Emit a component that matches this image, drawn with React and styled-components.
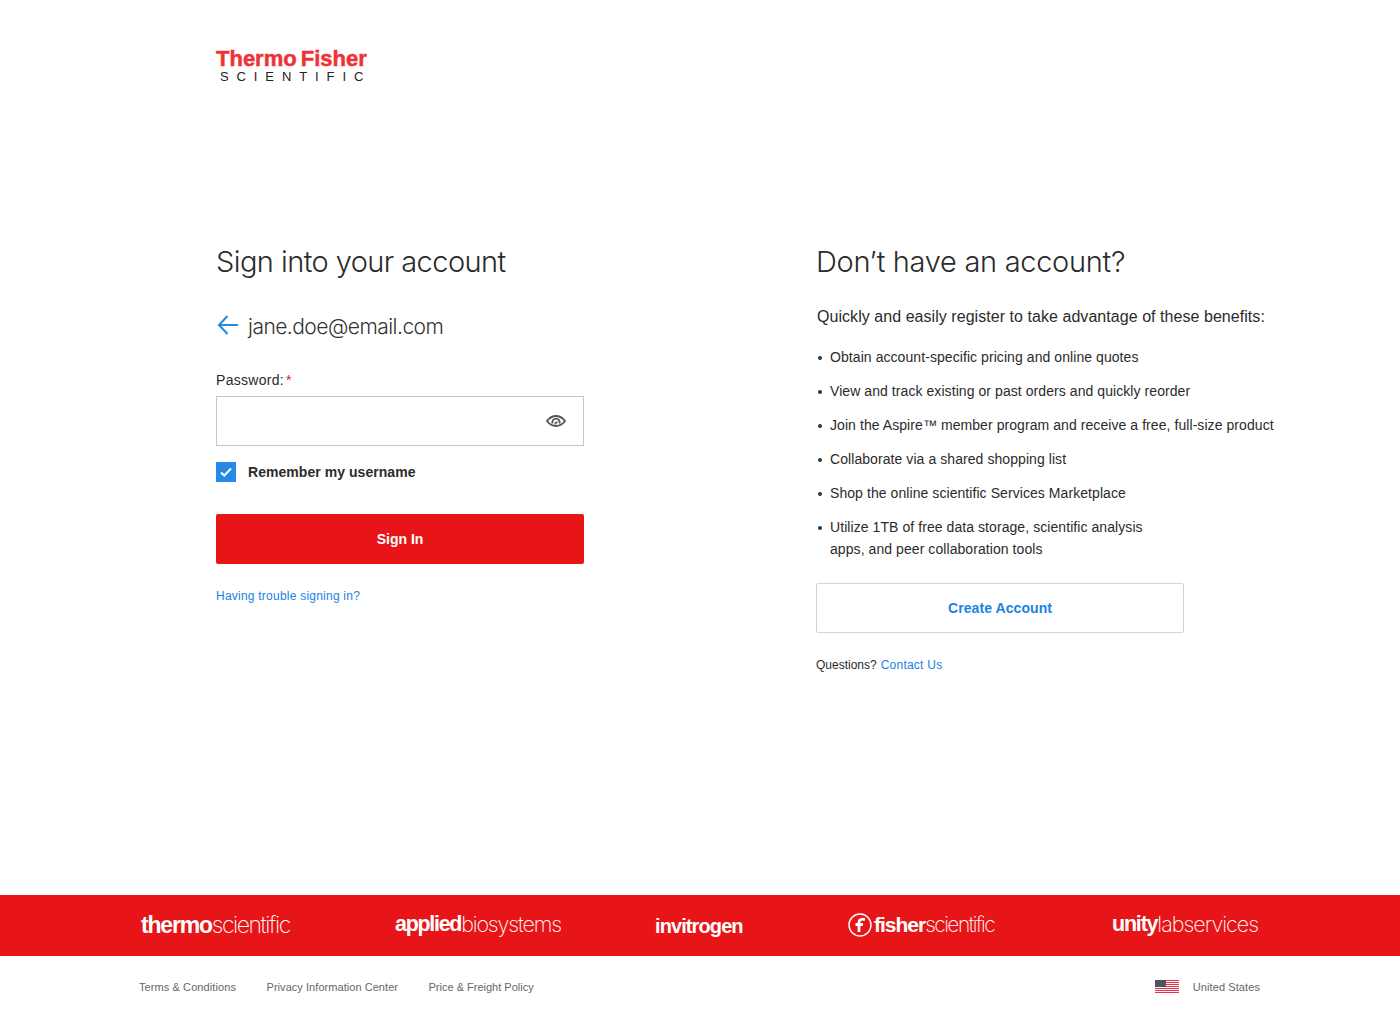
import React from 'react';
import styled, { createGlobalStyle } from 'styled-components';

const GlobalStyle = createGlobalStyle`
  html, body {
    margin: 0;
    padding: 0;
    background: #fff;
  }
  body {
    font-family: "Liberation Sans", Arial, sans-serif;
    color: #2b2b2b;
  }
`;

const Page = styled.div`
  min-height: 100vh;
  display: flex;
  flex-direction: column;
`;

const Header = styled.header`
  height: 245px;
  padding: 49px 0 0 216px;
  box-sizing: border-box;
`;

const Logo = styled.div`
  width: 152px;
`;

const LogoTop = styled.div`
  color: #ee3338;
  font-weight: 700;
  font-size: 22px;
  line-height: 20px;
  white-space: nowrap;
  display: flex;
  gap: 4px;
  -webkit-text-stroke: 0.5px #ee3338;
`;

const LogoBottom = styled.div`
  color: #222;
  font-size: 13px;
  line-height: 12px;
  letter-spacing: 7.9px;
  margin-top: 2px;
  padding-left: 4px;
  white-space: nowrap;
`;

const Main = styled.main`
  flex: 1;
  display: grid;
  grid-template-columns: 368px 1fr;
  column-gap: 232px;
  padding-left: 216px;
`;

const Heading = styled.h1`
  margin: 0;
  font-family: "Inter", "Liberation Sans", sans-serif;
  font-weight: 300;
  font-size: 29px;
  line-height: 34px;
  color: #2b2b2b;
  letter-spacing: ${p => p.$track}px;
`;

const EmailRow = styled.div`
  display: flex;
  align-items: center;
  gap: 9px;
  margin-top: 31px;
  height: 30px;
`;

const BackIcon = styled.svg`
  width: 23px;
  height: 22px;
  flex: none;
`;

const Email = styled.span`
  font-family: "Inter", "Liberation Sans", sans-serif;
  font-weight: 300;
  font-size: 21px;
  letter-spacing: -0.53px;
  padding-top: 2px;
  color: #333;
`;

const FieldLabel = styled.label`
  display: block;
  margin-top: 31px;
  font-size: 14px;
  line-height: 18px;
  letter-spacing: 0.3px;
  color: #2b2b2b;
`;

const Star = styled.span`
  color: #e8171a;
  margin-left: 2px;
`;

const InputBox = styled.div`
  margin-top: 7px;
  height: 50px;
  box-sizing: border-box;
  border: 1px solid #c6c6c6;
  display: flex;
  align-items: center;
  justify-content: flex-end;
  padding-right: 17px;
`;

const CheckRow = styled.div`
  display: flex;
  align-items: center;
  gap: 12px;
  margin-top: 16px;
  height: 20px;
`;

const CheckBox = styled.span`
  width: 20px;
  height: 20px;
  background: #2589e8;
  display: flex;
  align-items: center;
  justify-content: center;
`;

const CheckLabel = styled.span`
  font-size: 14px;
  font-weight: 700;
  letter-spacing: 0.05px;
  color: #2b2b2b;
`;

const SignIn = styled.button`
  display: block;
  width: 100%;
  height: 50px;
  margin-top: 32px;
  border: 0;
  border-radius: 2px;
  background: #e81518;
  color: #fff;
  font: 700 14px "Liberation Sans", Arial, sans-serif;
`;

const SmallLink = styled.a`
  color: #1a82e2;
  font-size: 12px;
  letter-spacing: 0.23px;
  text-decoration: none;
`;

const TroubleRow = styled.div`
  margin-top: 23px;
  line-height: 16px;
`;

const Intro = styled.p`
  margin: 27px 0 0;
  font-size: 16px;
  line-height: 22px;
  letter-spacing: 0.05px;
  color: #2b2b2b;
  padding-left: 1px;
`;

const Benefits = styled.ul`
  list-style: none;
  margin: 18px 0 0;
  padding: 0;
`;

const Benefit = styled.li`
  position: relative;
  padding-left: 14px;
  font-size: 14px;
  line-height: 22px;
  letter-spacing: 0.07px;
  margin-bottom: 12px;
  color: #2b2b2b;

  &::before {
    content: '';
    position: absolute;
    left: 2px;
    top: 10px;
    width: 4px;
    height: 4px;
    border-radius: 50%;
    background: #333;
  }

  &:last-child {
    margin-bottom: 0;
  }
`;

const CreateAccount = styled.button`
  display: block;
  width: 368px;
  height: 50px;
  margin-top: 23px;
  background: #fff;
  border: 1px solid #d4d4d4;
  border-radius: 2px;
  color: #1a82e2;
  font: 700 14px "Liberation Sans", Arial, sans-serif;
  letter-spacing: 0.08px;
`;

const Questions = styled.div`
  margin-top: 24px;
  font-size: 12px;
  line-height: 16px;
  color: #2b2b2b;
  display: flex;
  gap: 4px;
`;

const BrandBar = styled.div`
  height: 61px;
  background: #e81518;
  display: flex;
  align-items: center;
  padding-left: 141px;
  color: #fff;
`;

const Brand = styled.div`
  display: flex;
  align-items: center;
  width: ${p => p.$width}px;
  font-size: ${p => p.$size}px;
  white-space: nowrap;
  line-height: 30px;
  margin-top: ${p => p.$drop || 0}px;
`;

const BrandBold = styled.span`
  font-weight: 700;
  letter-spacing: ${p => p.$track}px;
`;

const BrandLight = styled.span`
  font-family: "Inter", "Liberation Sans", sans-serif;
  font-weight: 200;
  letter-spacing: ${p => p.$track}px;
`;

const FisherMark = styled.svg`
  width: 24px;
  height: 24px;
  margin-right: 2px;
  flex: none;
`;

const FootBar = styled.footer`
  height: 61px;
  display: flex;
  align-items: center;
  padding: 0 140px 0 139px;
  font-size: 11px;
  color: #666;
`;

const FootLinks = styled.nav`
  display: flex;
  gap: 30.5px;
  flex: 1;
`;

const FootLink = styled.a`
  color: #666;
  text-decoration: none;
  letter-spacing: ${p => p.$track || 0}px;
`;

const Locale = styled.div`
  display: flex;
  align-items: center;
  gap: 14px;
  letter-spacing: 0.09px;
`;

const Flag = () => (
  <svg width="24" height="13" viewBox="0 0 24 13">
    {[0, 2, 4, 6, 8, 10, 12].map(y => (
      <rect key={y} x="0" y={y} width="24" height="1" fill="#e0394a" />
    ))}
    {[1, 3, 5, 7, 9, 11].map(y => (
      <rect key={y} x="0" y={y} width="24" height="1" fill="#f7f3f3" />
    ))}
    <rect x="0" y="0" width="11" height="7" fill="#50535e" />
  </svg>
);

const benefits = [
  'Obtain account-specific pricing and online quotes',
  'View and track existing or past orders and quickly reorder',
  'Join the Aspire™ member program and receive a free, full-size product',
  'Collaborate via a shared shopping list',
  'Shop the online scientific Services Marketplace',
];

export default function App() {
  return (
    <Page>
      <GlobalStyle />
      <Header>
        <Logo>
          <LogoTop><span>Thermo</span><span>Fisher</span></LogoTop>
          <LogoBottom>SCIENTIFIC</LogoBottom>
        </Logo>
      </Header>
      <Main>
        <section>
          <Heading $track={-0.57}>Sign into your account</Heading>
          <EmailRow>
            <BackIcon viewBox="0 0 23 22" fill="none" stroke="#2589e8" strokeWidth="2">
              <path d="M22 11H3M11.500 2 3 11l8.500 9" />
            </BackIcon>
            <Email>jane.doe@email.com</Email>
          </EmailRow>
          <FieldLabel>Password:<Star>*</Star></FieldLabel>
          <InputBox>
            <svg width="20" height="14" viewBox="0 0 20 14" fill="none" stroke="#555" strokeWidth="1.8">
              <path d="M1 7c2.400-3.200 5.400-5 9-5s6.600 1.800 9 5c-2.400 3.200-5.400 5-9 5s-6.600-1.800-9-5Z" />
              <path d="M6.500 9.500a3.700 3.700 0 1 1 7 0" />
              <path d="M9.500 10.500a1.500 1.500 0 0 1 2-2" />
            </svg>
          </InputBox>
          <CheckRow>
            <CheckBox>
              <svg width="12" height="10" viewBox="0 0 12 10" fill="none" stroke="#fff" strokeWidth="2">
                <path d="M1 5.500 4.300 8.500 11 1.500" />
              </svg>
            </CheckBox>
            <CheckLabel>Remember my username</CheckLabel>
          </CheckRow>
          <SignIn>Sign In</SignIn>
          <TroubleRow><SmallLink href="#">Having trouble signing in?</SmallLink></TroubleRow>
        </section>
        <section>
          <Heading $track={-0.3}>Don’t have an account?</Heading>
          <Intro>Quickly and easily register to take advantage of these benefits:</Intro>
          <Benefits>
            {benefits.map(text => <Benefit key={text}>{text}</Benefit>)}
            <Benefit>Utilize 1TB of free data storage, scientific analysis<br />apps, and peer collaboration tools</Benefit>
          </Benefits>
          <CreateAccount>Create Account</CreateAccount>
          <Questions>Questions? <SmallLink href="#">Contact Us</SmallLink></Questions>
        </section>
      </Main>
      <BrandBar>
        <Brand $width={254} $size={23} $drop={-2}>
          <BrandBold $track={-1.2}>thermo</BrandBold><BrandLight $track={-1.45}>scientific</BrandLight>
        </Brand>
        <Brand $width={260} $size={21.5} $drop={-3}>
          <BrandBold $track={-1.3}>applied</BrandBold><BrandLight $track={-1.15}>biosystems</BrandLight>
        </Brand>
        <Brand $width={193} $size={20}>
          <BrandBold $track={-0.9}>invitrogen</BrandBold>
        </Brand>
        <Brand $width={264} $size={21} $drop={-2}>
          <FisherMark viewBox="0 0 24 24" fill="none" stroke="#fff">
            <circle cx="12" cy="12" r="11" strokeWidth="1.400" />
            <path d="M17 6.800c-3-1.200-6-.6-6 2.700V19M7.500 11.500h7.500" strokeWidth="2.800" />
          </FisherMark>
          <BrandBold $track={-1}>fisher</BrandBold><BrandLight $track={-1.55}>scientific</BrandLight>
        </Brand>
        <Brand $width={150} $size={21.5} $drop={-3}>
          <BrandBold $track={-1.2}>unity</BrandBold><BrandLight $track={-1}>labservices</BrandLight>
        </Brand>
      </BrandBar>
      <FootBar>
        <FootLinks>
          <FootLink href="#" $track={0.09}>Terms &amp; Conditions</FootLink>
          <FootLink href="#" $track={0.05}>Privacy Information Center</FootLink>
          <FootLink href="#">Price &amp; Freight Policy</FootLink>
        </FootLinks>
        <Locale><Flag />United States</Locale>
      </FootBar>
    </Page>
  );
}
